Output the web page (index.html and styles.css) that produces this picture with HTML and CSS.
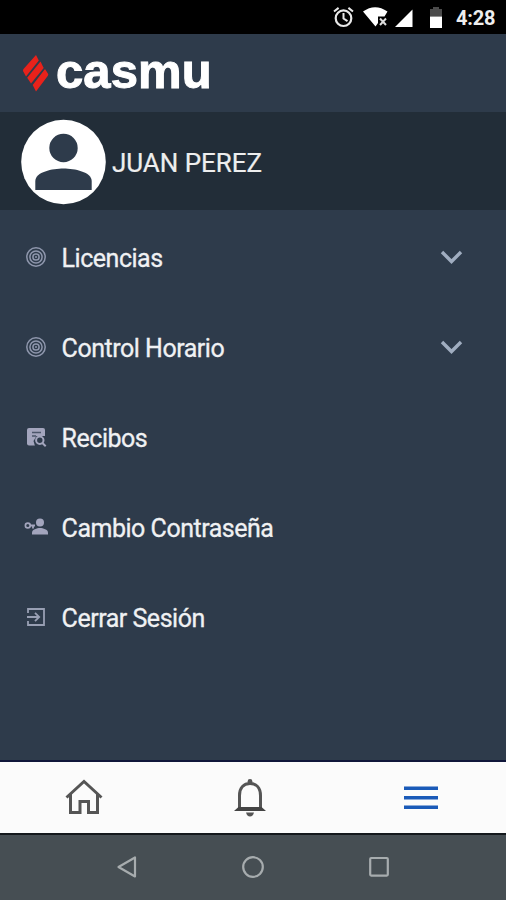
FILE: index.html
```html
<!DOCTYPE html>
<html lang="es">
  <head>
    <meta charset="UTF-8" />
    <meta name="viewport" content="width=device-width, initial-scale=1.0" />
    <title>Casmu</title>
    <link rel="stylesheet" href="styles.css">
  </head>

  <body>
    <div class="screen">
      <div class="status-bar">
        <svg class="status-icons" width="110" height="34" viewBox="333 0 110 34">
          <circle cx="343.5" cy="18.2" r="7.8" fill="none" stroke="#e8e8e8" stroke-width="2.2" />
          <path d="M343.5 13v5.5l4 2.6M334 11.5l4.6-3.6M353 11.5l-4.6-3.6" fill="none" stroke="#e8e8e8" stroke-width="2" />
          <path d="M363 11.5Q375 3 387.5 11.5L384.5 16.5H378V23L375.5 26.5Z" fill="#fff" />
          <path d="M380 18.5l6 6.5M386 18.5l-6 6.5" stroke="#ddd" stroke-width="2" />
          <path d="M412.500 9.500V27H395Z" fill="#fff" />
          <path d="M430 9h3V7h6v2h3v7.500h-12z" fill="#4b4b4b" />
          <path d="M430 16.500h12V28h-12z" fill="#fff" />
        </svg>
        <span class="clock">4:28</span>
      </div>

      <header class="header">
        <svg class="logo-mark" width="26" height="38" viewBox="23 55 26 38">
          <g fill="#e8221b">
            <path d="M36 56L38.800 61.500L26 77.500L23 72Q23 70.500 23.500 70Z" />
            <path d="M40.500 62.500L43.700 69L31 84.500L27.200 78.700Z" />
            <path d="M45 70L48.200 75Q48.500 76 47.700 77L36 92.500L32.700 86Z" />
          </g>
        </svg>
        <span class="logo-text">casmu</span>
      </header>

      <div class="user">
        <svg class="avatar" width="86" height="86" viewBox="0 0 86 86">
          <circle cx="43.500" cy="43" r="42.300" fill="#fff" />
          <circle cx="43.500" cy="29" r="14.200" fill="#2e3b4b" />
          <path d="M15.300 71V62C15.300 53 32.500 49.500 43.500 49.500S71.700 53 71.700 62V71Z" fill="#2e3b4b" />
        </svg>
        <span class="user-name">JUAN PEREZ</span>
      </div>

      <nav class="menu">
        <a class="menu-item">
          <svg class="menu-icon" width="24" height="24" viewBox="0 0 24 24">
            <g fill="none" stroke="#8f97ad" stroke-width="1.500">
              <circle cx="12" cy="12" r="9.200" />
              <circle cx="12" cy="12" r="6.100" />
              <circle cx="12" cy="12" r="3.100" />
            </g>
            <circle cx="12" cy="12" r="1" fill="#8f97ad" />
          </svg>
          <span class="menu-label">Licencias</span>
          <svg class="chevron" width="24" height="18" viewBox="0 0 24 18">
            <path d="M2 4L11.500 13.500L21 4" />
          </svg>
        </a>
        <a class="menu-item">
          <svg class="menu-icon" width="24" height="24" viewBox="0 0 24 24">
            <g fill="none" stroke="#8f97ad" stroke-width="1.500">
              <circle cx="12" cy="12" r="9.200" />
              <circle cx="12" cy="12" r="6.100" />
              <circle cx="12" cy="12" r="3.100" />
            </g>
            <circle cx="12" cy="12" r="1" fill="#8f97ad" />
          </svg>
          <span class="menu-label">Control Horario</span>
          <svg class="chevron" width="24" height="18" viewBox="0 0 24 18">
            <path d="M2 4L11.500 13.500L21 4" />
          </svg>
        </a>
        <a class="menu-item">
          <svg class="menu-icon" width="24" height="24" viewBox="0 0 24 24">
            <rect x="3" y="3" width="18" height="17.500" rx="2" fill="#a3a5bd" />
            <path d="M8 7.500h9M8 11h4" stroke="#4b566a" stroke-width="1.300" />
            <path d="M21.500 11v10H11l-1.500-5 3-5z" fill="#2e3b4b" />
            <circle cx="15.800" cy="15.300" r="3.700" fill="none" stroke="#a3a5bd" stroke-width="2" />
            <path d="M18.400 18l3.300 3.300" stroke="#a3a5bd" stroke-width="2" />
          </svg>
          <span class="menu-label">Recibos</span>
        </a>
        <a class="menu-item">
          <svg class="menu-icon" width="24" height="24" viewBox="0 0 24 24">
            <circle cx="16" cy="7.500" r="4" fill="#a3a5bd" />
            <path d="M8 19.500v-2c0-3 5-4.500 8-4.500s8 1.500 8 4.500v2z" fill="#a3a5bd" />
            <circle cx="3.800" cy="10.500" r="2.400" fill="none" stroke="#a3a5bd" stroke-width="1.700" />
            <path d="M6 10.500h5M9 10.500v3" fill="none" stroke="#a3a5bd" stroke-width="1.800" />
          </svg>
          <span class="menu-label">Cambio Contraseña</span>
        </a>
        <a class="menu-item">
          <svg class="menu-icon" width="24" height="24" viewBox="0 0 24 24">
            <path d="M4 8V4h16v16H4v-4" fill="none" stroke="#989fb3" stroke-width="1.800" />
            <path d="M3 12h12M11 7.800l4.200 4.200-4.200 4.200" fill="none" stroke="#989fb3" stroke-width="1.800" />
          </svg>
          <span class="menu-label">Cerrar Sesión</span>
        </a>
      </nav>

      <div class="tab-bar">
        <a class="tab">
          <svg width="38" height="40" viewBox="65 778 38 40">
            <path d="M66.500 797.500L84 781.500L101.500 797.500M70.500 794V812.500H80V801.500H88.500V812.500H97.500V794" fill="none" stroke="#555" stroke-width="3" />
          </svg>
        </a>
        <a class="tab">
          <svg width="34" height="40" viewBox="233 778 34 40">
            <path d="M239.500 809V795.500C239.500 787.500 244 783.500 250 783.500S260.500 787.500 260.500 795.500V809" fill="none" stroke="#555" stroke-width="3" />
            <path d="M234 811l4.500-4h23l4.500 4z" fill="#444" />
            <circle cx="250" cy="781.500" r="2.400" fill="#555" />
            <path d="M246 812.500h8q-1 4-4 4t-4-4z" fill="#555" />
          </svg>
        </a>
        <a class="tab">
          <svg width="38" height="40" viewBox="400 778 38 40">
            <path d="M404 788.300h34M404 797.800h34M404 807.300h34" stroke="#1a5ab8" stroke-width="3.400" />
          </svg>
        </a>
      </div>

      <div class="system-nav">
        <svg width="24" height="24" viewBox="0 0 24 24">
          <path d="M3.500 12L20 2.500V21.500Z" />
        </svg>
        <svg width="24" height="24" viewBox="0 0 24 24">
          <circle cx="12" cy="12" r="9.800" />
        </svg>
        <svg width="24" height="24" viewBox="0 0 24 24">
          <rect x="3.200" y="3" width="17.600" height="17.600" rx="1" />
        </svg>
      </div>
    </div>
  </body>
</html>
```
FILE: styles.css
```css
* {
  box-sizing: border-box;
}
body {
  margin: 0;
  font-family: Roboto, sans-serif;
}
svg {
  display: block;
  flex-shrink: 0;
}
.screen {
  width: 506px;
  height: 900px;
  display: flex;
  flex-direction: column;
  background: #2e3b4b;
  overflow: hidden;
}

.status-bar {
  height: 34px;
  display: flex;
  align-items: center;
  background: #000;
  padding-left: 333px;
}
.clock {
  margin: 2px 0 0 13px;
  color: #eee;
  font-size: 20px;
  font-weight: 700;
  letter-spacing: -0.2px;
}

.header {
  height: 78px;
  display: flex;
  align-items: center;
  padding-left: 23px;
}
.logo-text {
  margin: -5px 0 0 7px;
  color: #fff;
  font-family: "Liberation Sans", sans-serif;
  font-size: 49px;
  font-weight: 700;
  line-height: 60px;
  letter-spacing: 0.1px;
  -webkit-text-stroke: 1px #fff;
}

.user {
  height: 98px;
  display: flex;
  align-items: center;
  padding: 2px 0 0 20px;
  background: #222d38;
}
.user-name {
  margin: 2px 0 0 6px;
  color: #eee;
  font-size: 26px;
  letter-spacing: -0.05px;
  -webkit-text-stroke: 0.2px #eee;
}

.menu {
  flex: 1;
  padding-top: 2px;
}
.menu-item {
  height: 90px;
  display: flex;
  align-items: center;
  padding: 0 42px 0 24px;
}
.menu-label {
  flex: 1;
  margin: 2px 0 0 13.6px;
  color: #f0f1f3;
  font-size: 25px;
  letter-spacing: -0.48px;
  -webkit-text-stroke: 0.3px #f0f1f3;
}
.chevron path {
  fill: none;
  stroke: #a0adc0;
  stroke-width: 3.4;
}

.tab-bar {
  height: 75px;
  display: grid;
  grid-template-columns: 168px 164px 1fr;
  background: #fbfbfb;
  border-top: 2px solid #10163a;
  border-bottom: 2px solid #14191d;
}
.tab {
  display: flex;
  align-items: center;
  justify-content: center;
}

.system-nav {
  height: 65px;
  display: flex;
  align-items: center;
  justify-content: center;
  gap: 102px;
  padding-bottom: 2px;
  background: #464e53;
}
.system-nav path,
.system-nav circle,
.system-nav rect {
  fill: none;
  stroke: #a7acae;
  stroke-width: 2.2;
  stroke-linejoin: round;
}
```
